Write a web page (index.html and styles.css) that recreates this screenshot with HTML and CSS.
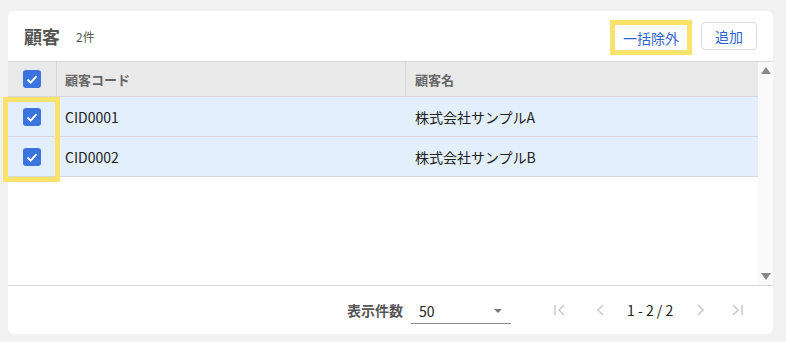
FILE: index.html
```html
<!DOCTYPE html>
<html lang="ja">

<head>
    <meta charset="UTF-8">
    <title>顧客</title>
    <link rel="stylesheet" href="styles.css">
</head>

<body>
    <div class="card">
        <div class="card-header">
            <h2 class="title">顧客</h2>
            <span class="count">2件</span>
            <div class="actions">
                <button class="btn-text marked">一括除外</button>
                <button class="btn-outline">追加</button>
            </div>
        </div>

        <div class="grid">
            <div class="grid-main">
                <div class="grid-head">
                    <div class="cell cell-check"><span class="checkbox"><svg viewBox="0 0 18 18"><polyline points="4.5,9.5 7.7,12.6 13.5,6.2"/></svg></span></div>
                    <div class="cell cell-code">顧客コード</div>
                    <div class="cell cell-name">顧客名</div>
                </div>
                <div class="grid-body">
                    <div class="row-mark"></div>
                    <div class="grid-row">
                        <div class="cell cell-check"><span class="checkbox"><svg viewBox="0 0 18 18"><polyline points="4.5,9.5 7.7,12.6 13.5,6.2"/></svg></span></div>
                        <div class="cell cell-code">CID0001</div>
                        <div class="cell cell-name">株式会社サンプルA</div>
                    </div>
                    <div class="grid-row">
                        <div class="cell cell-check"><span class="checkbox"><svg viewBox="0 0 18 18"><polyline points="4.5,9.5 7.7,12.6 13.5,6.2"/></svg></span></div>
                        <div class="cell cell-code">CID0002</div>
                        <div class="cell cell-name">株式会社サンプルB</div>
                    </div>
                </div>
            </div>
            <div class="scrollbar">
                <span class="arrow-up"></span>
                <span class="arrow-down"></span>
            </div>
        </div>

        <div class="card-footer">
            <span class="page-size-label">表示件数</span>
            <div class="select">
                <span>50</span>
                <span class="caret"></span>
            </div>
            <div class="pager">
                <svg class="pager-icon first" viewBox="0 0 16 16"><line x1="3" y1="3" x2="3" y2="13"/><polyline points="12,3 7,8 12,13"/></svg>
                <svg class="pager-icon prev" viewBox="0 0 16 16"><polyline points="10,3 5,8 10,13"/></svg>
                <span class="range">1 - 2 / 2</span>
                <svg class="pager-icon next" viewBox="0 0 16 16"><polyline points="6,3 11,8 6,13"/></svg>
                <svg class="pager-icon last" viewBox="0 0 16 16"><polyline points="4,3 9,8 4,13"/><line x1="13" y1="3" x2="13" y2="13"/></svg>
            </div>
        </div>
    </div>
</body>

</html>
```

FILE: styles.css
```css
body {
    margin: 0;
    padding: 11px 13px 8px 8px;
    background-color: #f1f1f1;
    font-family: "Noto Sans CJK JP", "Noto Sans", sans-serif;
    color: #222;
}

.card {
    width: 765px;
    height: 323px;
    background-color: #fff;
    border-radius: 6px;
    display: flex;
    flex-direction: column;
}

.card-header {
    height: 50px;
    display: flex;
    align-items: center;
    padding: 0 16px 0 16px;
    box-sizing: border-box;
}

.title {
    margin: 0;
    font-size: 18px;
    font-weight: bold;
    color: #555;
}

.count {
    margin-left: 16px;
    font-size: 12px;
    color: #555;
}

.actions {
    margin-left: auto;
    display: flex;
    align-items: center;
    gap: 9px;
}

button {
    font-family: inherit;
    font-size: 14px;
    color: #2f65d0;
    background: #fff;
    cursor: pointer;
}

.btn-text {
    border: none;
    width: 82px;
    height: 35px;
    padding: 0;
}

.btn-text.marked {
    border: 5px solid #fbe26b;
    margin-top: 3px;
}

.btn-outline {
    width: 56px;
    height: 28px;
    border: 1px solid #dcdcdc;
    border-radius: 4px;
    padding: 0;
}

.grid {
    flex: 1;
    display: flex;
    border-top: 1px solid #d8d8d8;
    border-bottom: 1px solid #d8d8d8;
}

.grid-main {
    flex: 1;
    display: flex;
    flex-direction: column;
}

.grid-head {
    height: 34px;
    display: flex;
    background-color: #e9e9e9;
    border-bottom: 1px solid #d8d8d8;
    font-size: 13px;
    font-weight: bold;
    color: #666;
}

.grid-head .cell-code,
.grid-head .cell-name {
    border-left: 1px solid #d8d8d8;
}

.grid-head .cell-code {
    padding-left: 8px;
}

.grid-head .cell-name {
    padding-left: 9px;
}

.grid-body {
    position: relative;
    flex: 1;
}

.grid-row {
    height: 39px;
    display: flex;
    background-color: #e3effc;
    border-bottom: 1px solid #d8d8d8;
    font-size: 14px;
}

.cell {
    display: flex;
    align-items: center;
    box-sizing: border-box;
}

.cell-check {
    width: 48px;
    justify-content: center;
}

.cell-code {
    width: 349px;
    padding-left: 9px;
}

.cell-name {
    flex: 1;
    padding-left: 10px;
}

.checkbox {
    width: 18px;
    height: 18px;
    border-radius: 3px;
    background-color: #3b74df;
    display: block;
}

.checkbox svg {
    width: 18px;
    height: 18px;
    display: block;
    fill: none;
    stroke: #fff;
    stroke-width: 1.8;
}

/* annotation frame over the row checkboxes */
.row-mark {
    position: absolute;
    left: -5px;
    top: 0;
    width: 47px;
    height: 75px;
    border: 5px solid #fbe26b;
    pointer-events: none;
}

.scrollbar {
    width: 15px;
    background-color: #fafafa;
    display: flex;
    flex-direction: column;
    justify-content: space-between;
    align-items: center;
    padding: 5px 0 5px;
}

.arrow-up {
    width: 0;
    height: 0;
    border-left: 5px solid transparent;
    border-right: 5px solid transparent;
    border-bottom: 7px solid #888;
}

.arrow-down {
    width: 0;
    height: 0;
    border-left: 5px solid transparent;
    border-right: 5px solid transparent;
    border-top: 7px solid #888;
}

.card-footer {
    height: 48px;
    display: flex;
    align-items: center;
    padding-left: 339px;
    box-sizing: border-box;
}

.page-size-label {
    font-size: 14px;
    font-weight: bold;
    color: #555;
}

.select {
    width: 100px;
    height: 26px;
    margin-left: 8px;
    margin-top: 2px;
    border-bottom: 1px solid #888;
    display: flex;
    align-items: center;
    justify-content: space-between;
    padding: 0 9px 0 8px;
    box-sizing: border-box;
    font-size: 14px;
}

.caret {
    width: 0;
    height: 0;
    border-left: 4px solid transparent;
    border-right: 4px solid transparent;
    border-top: 4px solid #777;
}

.pager {
    display: flex;
    align-items: center;
    margin-left: 41px;
}

.pager-icon {
    width: 16px;
    height: 16px;
    fill: none;
    stroke: #c9c9c9;
    stroke-width: 1.5;
}

.pager-icon.prev {
    margin-left: 25px;
}

.pager-icon.next {
    margin-left: 19px;
}

.pager-icon.last {
    margin-left: 21px;
}

.range {
    font-size: 14px;
    margin-left: 18px;
}
```
